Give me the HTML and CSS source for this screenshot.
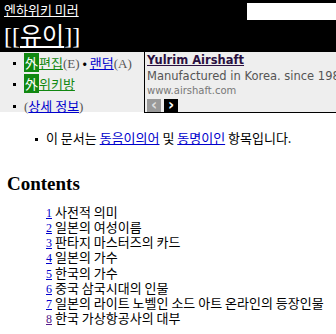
FILE: index.html
```html
<!DOCTYPE html>
<html>
  <head>
    <meta charset="utf-8">
    <link rel="stylesheet" href="styles.css">
  </head>
  <body>
    <!-- 상단 머리 -->
    <div class="header">
      <div class="header-left">
        <a class="site-link" href="#">엔하위키 미러</a>
        <div class="page-title">[[<a href="#">유이</a>]]</div>
      </div>
      <input class="search-box" type="text">
    </div>

    <!-- 도구 막대와 광고 -->
    <div class="toolbar">
      <ul class="tools">
        <li><span class="ext">外</span><a class="green" href="#">편집</a><span class="key">(E)</span> • <a href="#">랜덤</a><span class="key">(A)</span></li>
        <li><span class="ext">外</span><a class="green" href="#">위키방</a></li>
        <li><span class="key">(</span><a href="#">상세 정보</a><span class="key">)</span></li>
      </ul>
      <div class="ad">
        <a class="ad-title" href="#">Yulrim Airshaft</a>
        <div class="ad-text">Manufactured in Korea. since 1985</div>
        <div class="ad-url">www.airshaft.com</div>
        <div class="ad-nav">
          <span class="ad-btn prev">&lsaquo;</span>
          <span class="ad-btn next">&rsaquo;</span>
        </div>
      </div>
    </div>

    <!-- 본문 -->
    <div class="content">
      <ul class="notice">
        <li>이 문서는 <a href="#">동음이의어</a> 및 <a href="#">동명이인</a> 항목입니다.</li>
      </ul>

      <h2 class="toc-title">Contents</h2>
      <ol class="toc">
        <li><a href="#">1</a><span>사전적 의미</span></li>
        <li><a href="#">2</a><span>일본의 여성이름</span></li>
        <li><a href="#">3</a><span>판타지 마스터즈의 카드</span></li>
        <li><a href="#">4</a><span>일본의 가수</span></li>
        <li><a href="#">5</a><span>한국의 가수</span></li>
        <li><a href="#">6</a><span>중국 삼국시대의 인물</span></li>
        <li><a href="#">7</a><span>일본의 라이트 노벨인 소드 아트 온라인의 등장인물</span></li>
        <li><a class="visited" href="#">8</a><span>한국 가상항공사의 대부</span></li>
      </ol>
    </div>
  </body>
</html>
```

FILE: styles.css
```css
body {
  margin: 0;
  font-family: "Noto Sans CJK KR", "DejaVu Sans", sans-serif;
  font-size: 13px;
  color: #000;
  background: #fff;
  overflow: hidden;
}

a {
  color: #0000cc;
}

/* 상단 머리 */
.header {
  display: flex;
  justify-content: space-between;
  align-items: flex-start;
  background: #000;
  height: 52px;
  padding: 0 0 0 4px;
}

.site-link {
  color: #fff;
  font-size: 13px;
  line-height: 20px;
}

.page-title {
  color: #fff;
  font-size: 24px;
  line-height: 28px;
  font-family: "Liberation Serif", "Noto Sans CJK KR", serif;
}

.page-title a {
  color: #fff;
  font-family: "Noto Sans CJK KR", sans-serif;
}

.search-box {
  width: 89px;
  height: 17px;
  margin-top: 3px;
  border: none;
  padding: 0;
  background: #fff;
}

/* 작은 네모 글머리표 */
.tools li,
.notice li {
  position: relative;
  list-style: none;
}

.tools li::before,
.notice li::before {
  content: "";
  position: absolute;
  left: -11px;
  top: 9px;
  width: 3px;
  height: 3px;
  background: #000;
}

/* 도구 막대 */
.toolbar {
  display: flex;
  background: #eeeeee;
  height: 60px;
}

.tools {
  width: 144px;
  flex-shrink: 0;
  margin: 0;
  padding: 0 0 0 24px;
  box-sizing: border-box;
  white-space: nowrap;
}

.tools li {
  height: 21px;
  line-height: 19px;
}

.tools li:first-child {
  margin-top: 1px;
}

.tools li:last-child {
  margin-top: 1px;
}

.ext {
  background: #118811;
  color: #fff;
  padding: 0 1px;
}

.green {
  color: #118811;
}

.key {
  color: #555;
  font-family: "Liberation Serif", serif;
}

/* 광고 상자 */
.ad {
  flex: 1;
  min-width: 0;
  margin-top: -1px;
  height: 60px;
  border-left: 1px solid #000;
  border-bottom: 1px solid #000;
  padding: 1px 0 0 2px;
  overflow: hidden;
  white-space: nowrap;
  font-family: "DejaVu Sans", Verdana, sans-serif;
}

.ad-title {
  display: block;
  color: #2a1040;
  font-weight: bold;
  font-size: 11.5px;
  line-height: 16px;
}

.ad-text {
  color: #555;
  font-size: 11.5px;
  line-height: 16px;
}

.ad-url {
  color: #777;
  font-size: 10px;
  line-height: 13px;
}

.ad-nav {
  display: flex;
  gap: 3px;
  margin-top: 2px;
}

.ad-btn {
  width: 14px;
  height: 13px;
  display: flex;
  align-items: center;
  justify-content: center;
  font-size: 15px;
  font-weight: bold;
  line-height: 13px;
  color: #fff;
}

.prev {
  background: #999;
  color: #ddd;
}

.next {
  background: #000;
}

/* 본문 */
.content {
  padding: 0 0 0 7px;
}

.notice {
  margin: 17px 0 0;
  padding-left: 39px;
}

.notice li {
  height: 18px;
  line-height: 18px;
}

.toc-title {
  font-family: "Liberation Serif", serif;
  font-size: 19px;
  font-weight: bold;
  margin: 25px 0 0;
  line-height: 24px;
}

.toc {
  list-style: none;
  margin: 8px 0 0;
  padding-left: 39px;
}

.toc li {
  display: flex;
  align-items: baseline;
  gap: 3px;
  height: 15.15px;
  line-height: 15px;
  white-space: nowrap;
}

.toc a {
  font-family: "Liberation Serif", serif;
  font-size: 12px;
}

.toc a.visited {
  color: #551a8b;
}
```
